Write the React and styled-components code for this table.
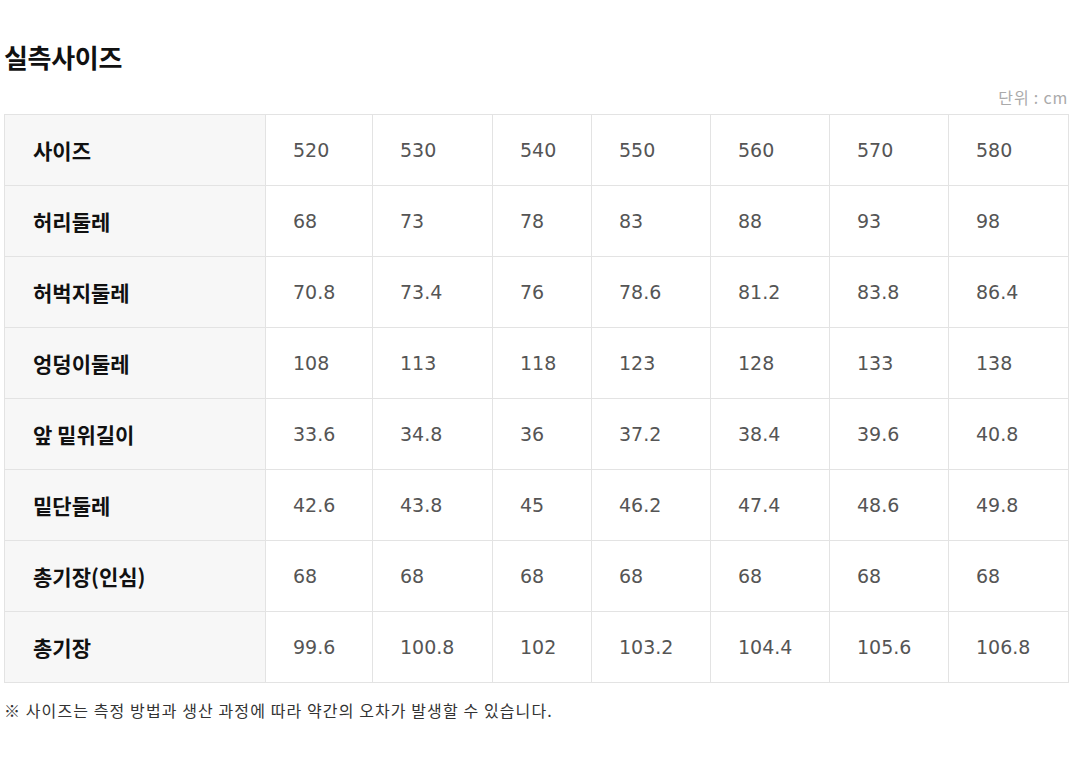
import React from 'react'
import styled, { createGlobalStyle } from 'styled-components'

const GlobalStyle = createGlobalStyle`
    body {
        margin: 0;
        background: #fff;
        font-family: "Noto Sans CJK KR", "Noto Sans", sans-serif;
    }
`;

const Page = styled.section`
    width: 1064px;
    padding: 38px 4px 0;
`;

const Title = styled.h2`
    margin: 0;
    font-size: 26px;
    font-weight: 700;
    line-height: 38px;
    color: #111;
    letter-spacing: -0.3px;
`;

const Unit = styled.p`
    margin: 11px 0 0;
    text-align: right;
    font-size: 16px;
    line-height: 20px;
    letter-spacing: 0.8px;
    color: #aaa;
`;

const Table = styled.table`
    width: 1064px;
    margin-top: 7px;
    border-collapse: collapse;
    table-layout: fixed;

    th, td {
        height: 70px;
        padding: 0 0 0 27px;
        border: 1px solid #e3e3e3;
        text-align: left;
    }
    th {
        background-color: #f7f7f7;
        color: #111;
        font-size: 21px;
        font-weight: 700;
        padding-left: 28px;
    }
    td {
        font-family: "DejaVu Sans", "Noto Sans CJK KR", sans-serif;
        font-size: 19px;
        color: #555;
        font-weight: 400;
    }
`;

const Note = styled.p`
    margin: 14px 0 0;
    font-size: 16px;
    line-height: 26px;
    letter-spacing: 1.1px;
    color: #333;
`;

const widths = [261, 107, 120, 99, 119, 119, 119, 120];

const rows = [
    ['사이즈', '520', '530', '540', '550', '560', '570', '580'],
    ['허리둘레', '68', '73', '78', '83', '88', '93', '98'],
    ['허벅지둘레', '70.8', '73.4', '76', '78.6', '81.2', '83.8', '86.4'],
    ['엉덩이둘레', '108', '113', '118', '123', '128', '133', '138'],
    ['앞 밑위길이', '33.6', '34.8', '36', '37.2', '38.4', '39.6', '40.8'],
    ['밑단둘레', '42.6', '43.8', '45', '46.2', '47.4', '48.6', '49.8'],
    ['총기장(인심)', '68', '68', '68', '68', '68', '68', '68'],
    ['총기장', '99.6', '100.8', '102', '103.2', '104.4', '105.6', '106.8'],
];

function App() {
    return (
        <Page>
            <GlobalStyle />
            <Title>실측사이즈</Title>
            <Unit>단위 : cm</Unit>
            <Table>
                <colgroup>
                    {widths.map((w, i) => <col key={i} style={{ width: w }} />)}
                </colgroup>
                <tbody>
                    {rows.map(([label, ...values]) => (
                        <tr key={label}>
                            <th scope="row">{label}</th>
                            {values.map((v, i) => <td key={i}>{v}</td>)}
                        </tr>
                    ))}
                </tbody>
            </Table>
            <Note>※ 사이즈는 측정 방법과 생산 과정에 따라 약간의 오차가 발생할 수 있습니다.</Note>
        </Page>
    )
}

export default App
